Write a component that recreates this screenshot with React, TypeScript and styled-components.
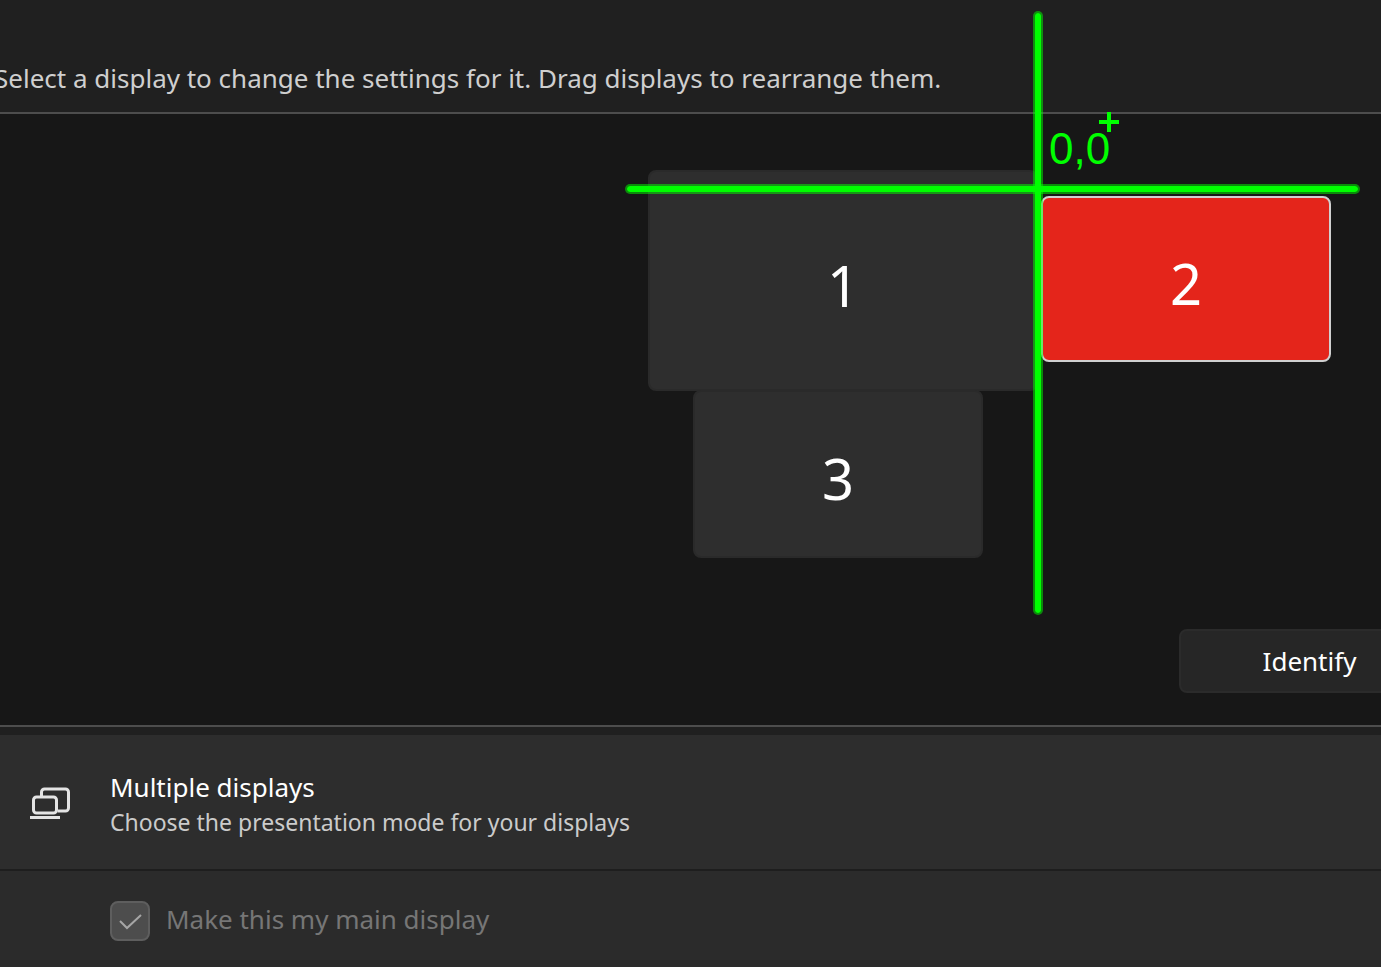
import React from 'react';
import styled, { createGlobalStyle } from 'styled-components';

const GlobalStyle = createGlobalStyle`
  * { box-sizing: border-box; }
  html { background: #202020; }
  body {
    margin: 0;
    overflow: hidden;
    color: #ffffff;
    font-family: "Noto Sans", "Open Sans", sans-serif;
    font-size: 26px;
    line-height: 36px;
  }
  button, input { font: inherit; color: inherit; margin: 0; padding: 0; border: 0; }
`;

const Page = styled.main`
  min-height: 100vh;
  display: flex;
  flex-direction: column;
  overflow: hidden;
`;

const Intro = styled.p`
  margin: 0 0 0 -6px;
  padding: 60px 0 16px;
  color: #cfcfcf;
  white-space: nowrap;
`;

const Stage = styled.section`
  display: flex;
  flex-direction: column;
  align-items: flex-end;
  padding: 56px 0 32px;
  background: #171717;
  border: solid #4d4d4d;
  border-width: 2px 0;
`;

const Arrangement = styled.div`
  position: relative;
  width: 684px;
  height: 388px;
  margin-right: 49px;
`;

interface Box { x: number; y: number; w: number; h: number }

const Display = styled.button<{ $box: Box; $selected?: boolean }>`
  position: absolute;
  left: ${p => p.$box.x}px;
  top: ${p => p.$box.y}px;
  width: ${p => p.$box.w}px;
  height: ${p => p.$box.h}px;
  padding-top: 8px;
  border: 2px solid ${p => (p.$selected ? '#d0d0d0' : '#2a2a2a')};
  border-radius: 8px;
  background: ${p => (p.$selected ? '#e4251b' : '#2e2e2e')};
  font-size: 56px;
  line-height: 64px;
`;

const Axis = styled.span<{ $box: Box }>`
  position: absolute;
  left: ${p => p.$box.x}px;
  top: ${p => p.$box.y}px;
  width: ${p => p.$box.w}px;
  height: ${p => p.$box.h}px;
  border: 2px solid rgba(0, 255, 0, 0.5);
  border-radius: 5px;
  background: #00ff00;
  background-clip: padding-box;
`;

const Origin = styled.span`
  position: absolute;
  left: 401px;
  top: -47px;
  color: #00ff00;
  font-family: "Liberation Sans", Arial, sans-serif;
  font-size: 44px;
  line-height: 52px;
`;

const Crosshair = styled.svg`
  position: absolute;
  left: 451px;
  top: -58px;
`;

const IdentifyButton = styled.button`
  width: 261px;
  height: 64px;
  margin: 71px -59px 0 0;
  border: 2px solid #2b2b2b;
  border-radius: 8px;
  background: #262626;
`;

const Card = styled.section`
  margin-top: 8px;
  flex: 1;
  display: flex;
  flex-direction: column;
  background: #2d2d2d;
`;

const CardHeader = styled.div`
  display: flex;
  align-items: center;
  gap: 40px;
  height: 136px;
  padding: 4px 30px 0;
  border-bottom: 2px solid #1e1e1e;
`;

const Title = styled.h2`
  margin: 0;
  font-size: 26px;
  font-weight: 400;
  line-height: 36px;
`;

const Description = styled.p`
  margin: 0;
  color: #cbcbcb;
  font-size: 23px;
  line-height: 34px;
`;

const Option = styled.label`
  flex: 1;
  display: flex;
  align-items: center;
  gap: 16px;
  min-height: 96px;
  padding: 4px 110px 0;
  background: #2b2b2b;
  color: #767676;
`;

const OptionText = styled.span`
  padding-bottom: 4px;
`;

const CheckSlot = styled.span`
  display: grid;
  place-items: center;
  & > * { grid-area: 1 / 1; }
  svg { pointer-events: none; }
`;

const Checkbox = styled.input`
  appearance: none;
  width: 40px;
  height: 40px;
  border: 2px solid #5e5e5e;
  border-radius: 8px;
  background: #4d4d4d;
`;

const displays: { id: number; box: Box }[] = [
  { id: 1, box: { x: 0, y: 0, w: 390, h: 221 } },
  { id: 3, box: { x: 45, y: 220, w: 290, h: 168 } },
  { id: 2, box: { x: 393, y: 26, w: 290, h: 166 } },
];

export default function App() {
  return (
    <>
      <GlobalStyle />
      <Page>
        <Intro>Select a display to change the settings for it. Drag displays to rearrange them.</Intro>
        <Stage>
          <Arrangement>
            {displays.map(d => (
              <Display key={d.id} type="button" $box={d.box} $selected={d.id === 2}>{d.id}</Display>
            ))}
            <Axis $box={{ x: -23, y: 14, w: 735, h: 10 }} />
            <Axis $box={{ x: 385, y: -159, w: 10, h: 604 }} />
            <Origin>0,0</Origin>
            <Crosshair width="20" height="20" viewBox="0 0 20 20" aria-hidden="true">
              <path d="M10 0V20M0 10H20" stroke="#00ff00" strokeWidth="4" />
            </Crosshair>
          </Arrangement>
          <IdentifyButton type="button">Identify</IdentifyButton>
        </Stage>
        <Card>
          <CardHeader>
            <svg width="40" height="34" viewBox="0 0 40 34" fill="none" stroke="#e4e4e4" strokeWidth="3" aria-hidden="true">
              <path d="M11.5 9V5a3 3 0 0 1 3-3H35.500a3 3 0 0 1 3 3V21a3 3 0 0 1-3 3H27.500" />
              <rect x="3.500" y="10" width="23" height="16" rx="3" />
              <path d="M0 30.500H30" />
            </svg>
            <div>
              <Title>Multiple displays</Title>
              <Description>Choose the presentation mode for your displays</Description>
            </div>
          </CardHeader>
          <Option>
            <CheckSlot>
              <Checkbox type="checkbox" defaultChecked disabled />
              <svg width="40" height="40" viewBox="0 0 40 40" fill="none" aria-hidden="true">
                <path d="M10 20L17 27L31 14" stroke="#a6a6a6" strokeWidth="2" />
              </svg>
            </CheckSlot>
            <OptionText>Make this my main display</OptionText>
          </Option>
        </Card>
      </Page>
    </>
  );
}
